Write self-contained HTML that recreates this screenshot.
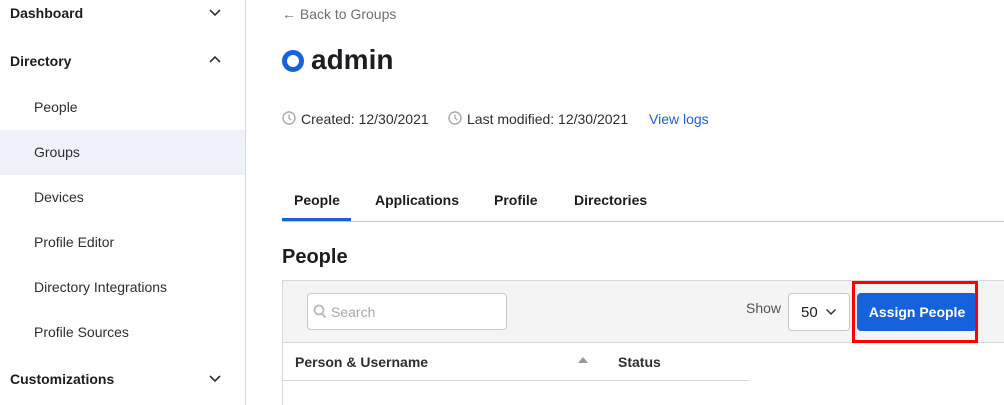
<!DOCTYPE html>
<html style="width:1004px;height:405px;overflow:hidden"><head><style>
*{margin:0;padding:0;box-sizing:border-box}
body{width:1004px;height:405px;overflow:hidden;background:#fff;font-family:"Liberation Sans",sans-serif;color:#1d1d21;position:relative}
.a{position:absolute;white-space:nowrap}
.sb{position:absolute;left:0;top:0;width:246px;height:405px;border-right:1px solid #d7d7dc}
.h{font-weight:bold;font-size:14px;left:10px}
.i{font-size:14px;left:34px;color:#2e2e33}
.chev{position:absolute;left:208px;width:14px;height:10px}
</style></head><body>
<div class="sb"></div>
<div class="a" style="left:0;top:130px;width:245px;height:45px;background:#f0f2fb"></div>
<div class="a h" style="top:5px">Dashboard</div>
<svg class="chev" style="top:8px" viewBox="0 0 14 10"><path d="M2 2l5 5 5-5" fill="none" stroke="#333" stroke-width="1.6"/></svg>
<div class="a h" style="top:53px">Directory</div>
<svg class="chev" style="top:55px" viewBox="0 0 14 10"><path d="M2 7l5-5 5 5" fill="none" stroke="#333" stroke-width="1.6"/></svg>
<div class="a i" style="top:99px">People</div>
<div class="a i" style="top:144px">Groups</div>
<div class="a i" style="top:189px">Devices</div>
<div class="a i" style="top:234px">Profile Editor</div>
<div class="a i" style="top:279px">Directory Integrations</div>
<div class="a i" style="top:324px">Profile Sources</div>
<div class="a h" style="top:371px">Customizations</div>
<svg class="chev" style="top:374px" viewBox="0 0 14 10"><path d="M2 2l5 5 5-5" fill="none" stroke="#333" stroke-width="1.6"/></svg>

<div class="a" style="left:282px;top:6px;font-size:14px;color:#6e6e78">← Back to Groups</div>
<div class="a" style="left:282px;top:50px;width:22px;height:22px;border:5px solid #1662dd;border-radius:50%"></div>
<div class="a" style="left:311px;top:44px;font-size:28px;font-weight:bold">admin</div>

<svg class="a" style="left:282px;top:111px" width="14" height="14" viewBox="0 0 14 14"><circle cx="7" cy="7" r="6" fill="none" stroke="#aaa" stroke-width="1.4"/><path d="M7 3.5v3.5l2.2 2.2" fill="none" stroke="#aaa" stroke-width="1.3"/></svg>
<div class="a" style="left:301px;top:111px;font-size:14px;color:#2e2e33">Created: 12/30/2021</div>
<svg class="a" style="left:448px;top:111px" width="14" height="14" viewBox="0 0 14 14"><circle cx="7" cy="7" r="6" fill="none" stroke="#aaa" stroke-width="1.4"/><path d="M7 3.5v3.5l2.2 2.2" fill="none" stroke="#aaa" stroke-width="1.3"/></svg>
<div class="a" style="left:467px;top:111px;font-size:14px;color:#2e2e33">Last modified: 12/30/2021</div>
<div class="a" style="left:649px;top:111px;font-size:14px;color:#1662dd">View logs</div>

<div class="a" style="left:294px;top:192px;font-size:14px;font-weight:bold">People</div>
<div class="a" style="left:375px;top:192px;font-size:14px;font-weight:bold">Applications</div>
<div class="a" style="left:494px;top:192px;font-size:14px;font-weight:bold">Profile</div>
<div class="a" style="left:574px;top:192px;font-size:14px;font-weight:bold">Directories</div>
<div class="a" style="left:282px;top:221px;width:722px;height:1px;background:#c8c8cc"></div>
<div class="a" style="left:282px;top:218px;width:69px;height:3px;background:#1662dd"></div>

<div class="a" style="left:282px;top:246px;font-size:20px;font-weight:bold">People</div>
<div class="a" style="left:282px;top:280px;width:722px;height:125px;border:1px solid #d7d7dc;border-right:none;border-bottom:none"></div>
<div class="a" style="left:283px;top:281px;width:721px;height:62px;background:#f4f4f4;border-bottom:1px solid #d7d7dc"></div>
<div class="a" style="left:749px;top:343px;width:255px;height:62px;background:#fff"></div>
<div class="a" style="left:307px;top:293px;width:200px;height:37px;background:#fff;border:1px solid #c8c8cc;border-radius:4px"></div>
<svg class="a" style="left:313px;top:304px" width="14" height="15" viewBox="0 0 14 15"><circle cx="6" cy="6" r="4.5" fill="none" stroke="#bbb" stroke-width="1.8"/><path d="M9 9.5l3.5 4" stroke="#bbb" stroke-width="2"/></svg>
<div class="a" style="left:331px;top:304px;font-size:14px;color:#aaa">Search</div>
<div class="a" style="left:746px;top:300px;font-size:14px;color:#555">Show</div>
<div class="a" style="left:788px;top:293px;width:62px;height:38px;background:#fff;border:1px solid #c8c8cc;border-radius:4px"></div>
<div class="a" style="left:801px;top:304px;font-size:15px">50</div>
<svg class="a" style="left:825px;top:308px" width="12" height="8" viewBox="0 0 12 8"><path d="M1.5 1.5l4.5 4.5 4.5-4.5" fill="none" stroke="#333" stroke-width="1.5"/></svg>
<div class="a" style="left:857px;top:293px;width:120px;height:38px;background:#1662dd;border-radius:4px;color:#fff;font-size:14px;font-weight:bold;text-align:center;line-height:38px">Assign People</div>
<div class="a" style="left:852px;top:281px;width:126px;height:62px;border:3px solid #f00"></div>

<div class="a" style="left:295px;top:354px;font-size:14px;font-weight:bold;color:#2e2e33">Person &amp; Username</div>
<svg class="a" style="left:578px;top:357px" width="10" height="6" viewBox="0 0 10 6"><path d="M0 6L5 0l5 6z" fill="#999"/></svg>
<div class="a" style="left:618px;top:354px;font-size:14px;font-weight:bold;color:#2e2e33">Status</div>
<div class="a" style="left:283px;top:380px;width:466px;height:1px;background:#d7d7dc"></div>
</body></html>
